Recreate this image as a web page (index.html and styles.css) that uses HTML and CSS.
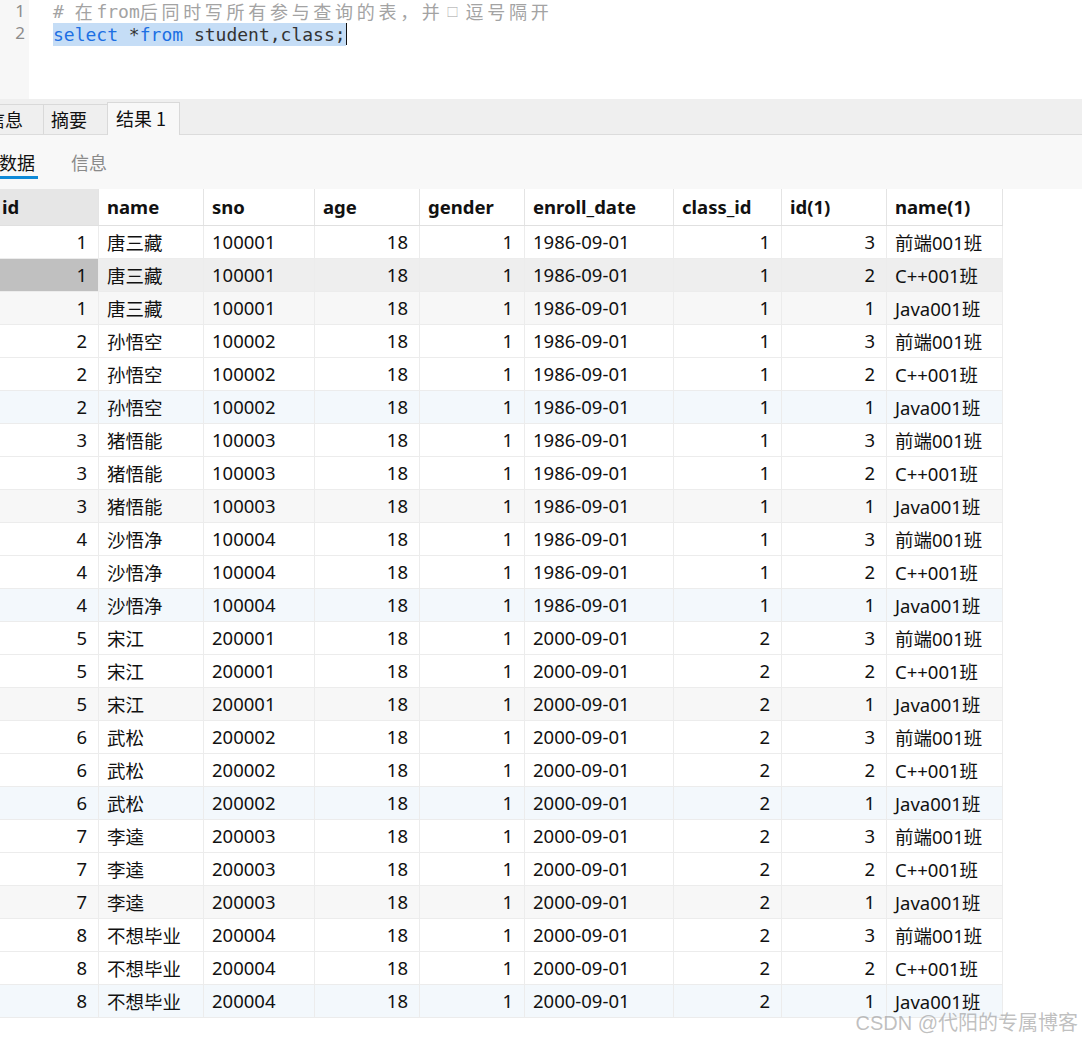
FILE: index.html
```html
<!DOCTYPE html>
<html lang="zh-CN">
<head>
<meta charset="utf-8">
<title>查询结果</title>
<link rel="stylesheet" href="styles.css">
</head>
<body>
<div class="editor">
  <div class="gutter">
    <div class="ln">1</div>
    <div class="ln">2</div>
  </div>
  <div class="code">
    <div class="line comment"># <span class="cj">在</span>from<span class="cj">后同时写所有参与查询的表，并</span><span class="cj box">□</span><span class="cj">逗号隔开</span></div>
    <div class="line"><span class="sel"><span class="kw">select</span> *<span class="kw">from</span> student,class;</span><span class="caret"></span></div>
  </div>
</div>

<div class="tabs">
  <div class="tab">信息</div>
  <div class="tab">摘要</div>
  <div class="tab active">结果 1</div>
</div>

<div class="subtabs">
  <div class="subtab current">数据</div>
  <div class="subtab">信息</div>
</div>

<div class="grid">
  <div class="row head"><div>id</div><div>name</div><div>sno</div><div>age</div><div>gender</div><div>enroll_date</div><div>class_id</div><div>id(1)</div><div>name(1)</div></div>
  <div class="row"><div>1</div><div>唐三藏</div><div>100001</div><div>18</div><div>1</div><div>1986-09-01</div><div>1</div><div>3</div><div>前端001班</div></div>
  <div class="row picked"><div>1</div><div>唐三藏</div><div>100001</div><div>18</div><div>1</div><div>1986-09-01</div><div>1</div><div>2</div><div>C++001班</div></div>
  <div class="row grey"><div>1</div><div>唐三藏</div><div>100001</div><div>18</div><div>1</div><div>1986-09-01</div><div>1</div><div>1</div><div>Java001班</div></div>
  <div class="row"><div>2</div><div>孙悟空</div><div>100002</div><div>18</div><div>1</div><div>1986-09-01</div><div>1</div><div>3</div><div>前端001班</div></div>
  <div class="row"><div>2</div><div>孙悟空</div><div>100002</div><div>18</div><div>1</div><div>1986-09-01</div><div>1</div><div>2</div><div>C++001班</div></div>
  <div class="row blue"><div>2</div><div>孙悟空</div><div>100002</div><div>18</div><div>1</div><div>1986-09-01</div><div>1</div><div>1</div><div>Java001班</div></div>
  <div class="row"><div>3</div><div>猪悟能</div><div>100003</div><div>18</div><div>1</div><div>1986-09-01</div><div>1</div><div>3</div><div>前端001班</div></div>
  <div class="row"><div>3</div><div>猪悟能</div><div>100003</div><div>18</div><div>1</div><div>1986-09-01</div><div>1</div><div>2</div><div>C++001班</div></div>
  <div class="row grey"><div>3</div><div>猪悟能</div><div>100003</div><div>18</div><div>1</div><div>1986-09-01</div><div>1</div><div>1</div><div>Java001班</div></div>
  <div class="row"><div>4</div><div>沙悟净</div><div>100004</div><div>18</div><div>1</div><div>1986-09-01</div><div>1</div><div>3</div><div>前端001班</div></div>
  <div class="row"><div>4</div><div>沙悟净</div><div>100004</div><div>18</div><div>1</div><div>1986-09-01</div><div>1</div><div>2</div><div>C++001班</div></div>
  <div class="row blue"><div>4</div><div>沙悟净</div><div>100004</div><div>18</div><div>1</div><div>1986-09-01</div><div>1</div><div>1</div><div>Java001班</div></div>
  <div class="row"><div>5</div><div>宋江</div><div>200001</div><div>18</div><div>1</div><div>2000-09-01</div><div>2</div><div>3</div><div>前端001班</div></div>
  <div class="row"><div>5</div><div>宋江</div><div>200001</div><div>18</div><div>1</div><div>2000-09-01</div><div>2</div><div>2</div><div>C++001班</div></div>
  <div class="row grey"><div>5</div><div>宋江</div><div>200001</div><div>18</div><div>1</div><div>2000-09-01</div><div>2</div><div>1</div><div>Java001班</div></div>
  <div class="row"><div>6</div><div>武松</div><div>200002</div><div>18</div><div>1</div><div>2000-09-01</div><div>2</div><div>3</div><div>前端001班</div></div>
  <div class="row"><div>6</div><div>武松</div><div>200002</div><div>18</div><div>1</div><div>2000-09-01</div><div>2</div><div>2</div><div>C++001班</div></div>
  <div class="row blue"><div>6</div><div>武松</div><div>200002</div><div>18</div><div>1</div><div>2000-09-01</div><div>2</div><div>1</div><div>Java001班</div></div>
  <div class="row"><div>7</div><div>李逵</div><div>200003</div><div>18</div><div>1</div><div>2000-09-01</div><div>2</div><div>3</div><div>前端001班</div></div>
  <div class="row"><div>7</div><div>李逵</div><div>200003</div><div>18</div><div>1</div><div>2000-09-01</div><div>2</div><div>2</div><div>C++001班</div></div>
  <div class="row grey"><div>7</div><div>李逵</div><div>200003</div><div>18</div><div>1</div><div>2000-09-01</div><div>2</div><div>1</div><div>Java001班</div></div>
  <div class="row"><div>8</div><div>不想毕业</div><div>200004</div><div>18</div><div>1</div><div>2000-09-01</div><div>2</div><div>3</div><div>前端001班</div></div>
  <div class="row"><div>8</div><div>不想毕业</div><div>200004</div><div>18</div><div>1</div><div>2000-09-01</div><div>2</div><div>2</div><div>C++001班</div></div>
  <div class="row blue"><div>8</div><div>不想毕业</div><div>200004</div><div>18</div><div>1</div><div>2000-09-01</div><div>2</div><div>1</div><div>Java001班</div></div>
</div>

<div class="watermark">CSDN @代阳的专属博客</div>
</body>
</html>
```

FILE: styles.css
```css
html, body {
  margin: 0;
  padding: 0;
  background: #ffffff;
  overflow: hidden;
}
body {
  width: 1082px;
  height: 1037px;
  position: relative;
  font-family: "Noto Sans", "Noto Sans CJK SC", sans-serif;
  color: #111111;
}

/* editor */
.editor {
  display: flex;
  height: 99px;
  background: #ffffff;
}
.gutter {
  width: 29px;
  background: #f7f7f7;
  box-sizing: border-box;
  padding-right: 4px;
  text-align: right;
  color: #8c8c8c;
  font-size: 17px;
  line-height: 23px;
}
.ln {
  height: 22px;
  line-height: 22px;
}
.code {
  padding-left: 24px;
  font-family: "DejaVu Sans Mono", "Noto Sans CJK SC", monospace;
  font-size: 18px;
  color: #333333;
}
.line {
  height: 22px;
  white-space: pre;
  display: flex;
  align-items: center;
}
.comment {
  color: #a3a3a3;
}
.cj {
  font-family: "Noto Sans CJK SC", sans-serif;
  font-size: 18px;
  letter-spacing: 3.7px;
}
.box {
  font-size: 12px;
  letter-spacing: 7px;
  padding-left: 3px;
}
.sel {
  display: inline-block;
  background: #c5ddf6;
  line-height: 23px;
  height: 23px;
  margin-top: 2px;
}
.kw {
  color: #1c6fe3;
}
.caret {
  display: inline-block;
  width: 1px;
  height: 22px;
  margin-top: 2px;
  background: #111111;
}

/* result tabs */
.tabs {
  display: flex;
  align-items: flex-end;
  height: 36px;
  box-sizing: border-box;
  background: #efefef;
  border-bottom: 1px solid #dcdcdc;
  margin-left: -21px;
}
.tab {
  min-width: 65px;
  box-sizing: border-box;
  height: 30px;
  padding: 0 13px 0 7px;
  border: 1px solid #d9d9d9;
  border-bottom: none;
  margin-right: -1px;
  background: #efefef;
  font-size: 18px;
  line-height: 28px;
  color: #111111;
  font-family: "Noto Sans CJK SC", "Noto Sans", sans-serif;
}
.tab.active {
  height: 33px;
  margin-bottom: -1px;
  background: #f8f8f8;
  line-height: 31px;
  padding-left: 8px;
  position: relative;
}

/* sub tabs */
.subtabs {
  display: flex;
  gap: 30px;
  height: 54px;
  box-sizing: border-box;
  padding-top: 13px;
  background: #f8f8f8;
  margin-left: -4px;
}
.subtab {
  padding: 0 3px;
  height: 31px;
  box-sizing: border-box;
  line-height: 28px;
  font-size: 18px;
  color: #8a8a8a;
  font-family: "Noto Sans CJK SC", sans-serif;
}
.subtab.current {
  color: #111111;
  border-bottom: 3px solid #0f8ad8;
}

/* grid */
.grid {
  margin-left: -6px;
  width: 1009px;
  font-size: 18.5px;
}
.row {
  display: grid;
  grid-template-columns: 105px 105px 111px 105px 105px 149px 108px 105px 116px;
  height: 33px;
  box-sizing: border-box;
  border-bottom: 1px solid #ececec;
  background: #ffffff;
}
.row > div {
  display: flex;
  align-items: center;
  box-sizing: border-box;
  padding: 0 11px 1px 8px;
  border-right: 1px solid #ececec;
  white-space: nowrap;
}
.row > div:nth-child(1),
.row > div:nth-child(4),
.row > div:nth-child(5),
.row > div:nth-child(7),
.row > div:nth-child(8) {
  justify-content: flex-end;
}
.row.head {
  height: 37px;
  border-bottom: 1px solid #e0e0e0;
  font-weight: 700;
}
.row.head > div {
  justify-content: flex-start;
  border-right-color: #e4e4e4;
}
.row.head > div:first-child {
  background: #e6e6e6;
}
.row.picked {
  background: #eeeeee;
}
.row.picked > div:first-child {
  background: #c0c0c0;
}
.row.grey {
  background: #f7f7f7;
}
.row.blue {
  background: #f3f8fc;
}

.watermark {
  position: absolute;
  right: 4px;
  top: 1007px;
  font-family: "Liberation Sans", "Noto Sans CJK SC", sans-serif;
  font-size: 20px;
  color: rgba(150, 150, 150, 0.6);
  white-space: nowrap;
}
```
